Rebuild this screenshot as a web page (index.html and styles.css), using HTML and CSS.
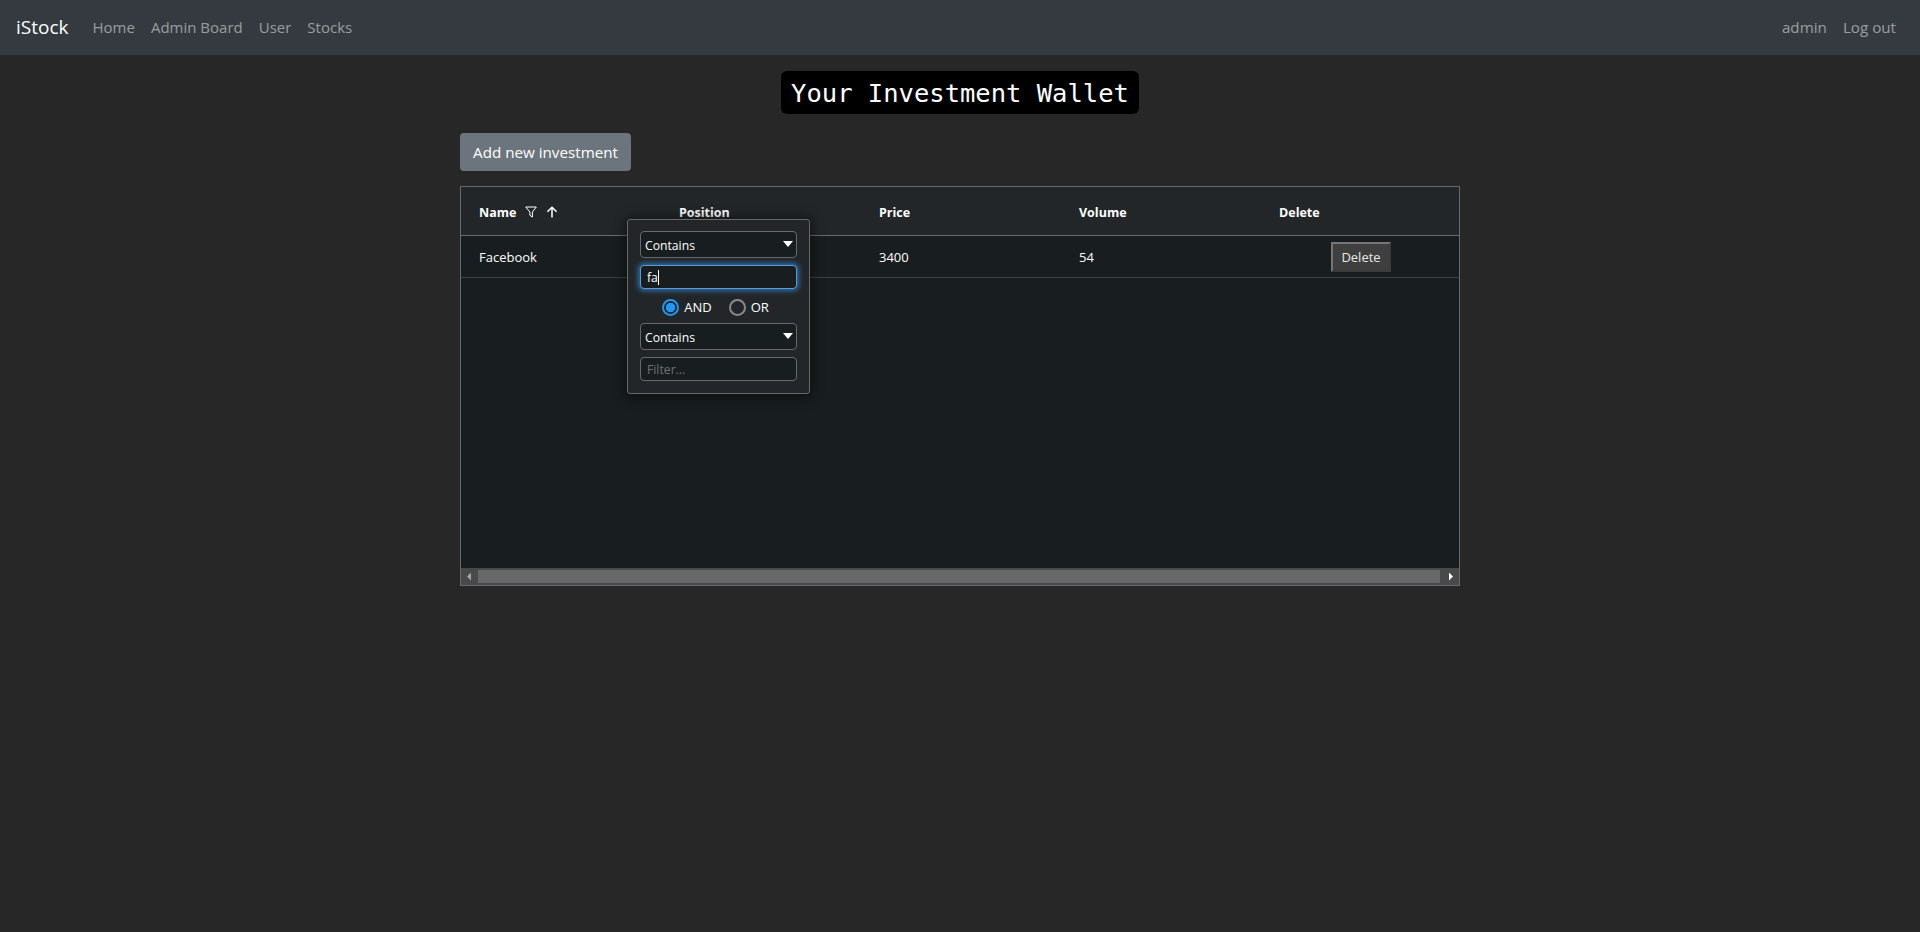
FILE: index.html
```html
<!DOCTYPE html>
<html lang="en">
<head>
    <meta charset="UTF-8">
    <title>iStock</title>
    <link rel="stylesheet" href="styles.css">
</head>
<body>
    <nav class="navbar">
        <a class="brand">iStock</a>
        <a class="nav-link">Home</a>
        <a class="nav-link">Admin Board</a>
        <a class="nav-link">User</a>
        <a class="nav-link">Stocks</a>
        <div class="nav-right">
            <a class="nav-link">admin</a>
            <a class="nav-link">Log out</a>
        </div>
    </nav>

    <main class="container">
        <div class="title-row">
            <h1 class="title">Your Investment Wallet</h1>
        </div>
        <button class="btn-add">Add new investment</button>

        <div class="grid">
            <div class="grid-header">
                <div class="cell head-cell">
                    Name
                    <svg class="head-icon" viewBox="0 0 12 12" width="12" height="12">
                        <path d="M.7 1h10.6L7.4 6v5L4.9 9.3V6z" fill="none" stroke="#fff" stroke-width="1"/>
                    </svg>
                    <svg class="head-icon" viewBox="0 0 12 12" width="12" height="12">
                        <path d="M6 11.5V1.2M1.4 5.8L6 1.2l4.6 4.6" fill="none" stroke="#fff" stroke-width="1.5"/>
                    </svg>
                </div>
                <div class="cell head-cell">Position</div>
                <div class="cell head-cell">Price</div>
                <div class="cell head-cell">Volume</div>
                <div class="cell head-cell">Delete</div>
            </div>
            <div class="grid-row">
                <div class="cell">Facebook</div>
                <div class="cell"></div>
                <div class="cell">3400</div>
                <div class="cell">54</div>
                <div class="cell"><button class="btn-delete">Delete</button></div>
            </div>
            <div class="grid-empty"></div>
            <div class="scrollbar">
                <span class="arrow arrow-left"></span>
                <span class="thumb"></span>
                <span class="arrow arrow-right"></span>
            </div>

            <div class="filter-menu">
                <div class="fake-select">Contains</div>
                <div class="fake-input focused">fa<span class="caret"></span></div>
                <div class="radios">
                    <span class="radio checked"></span><span class="radio-label">AND</span>
                    <span class="radio"></span><span class="radio-label">OR</span>
                </div>
                <div class="fake-select">Contains</div>
                <div class="fake-input placeholder">Filter...</div>
            </div>
        </div>
    </main>
</body>
</html>
```

FILE: styles.css
```css
* {
    box-sizing: border-box;
}

body {
    margin: 0;
    height: 932px;
    overflow: hidden;
    background-color: #272727;
    color: #fff;
    font-family: "Open Sans", "Noto Sans", sans-serif;
    font-size: 16px;
}

.navbar {
    display: flex;
    align-items: center;
    height: 55px;
    padding: 0 16px 2px;
    background-color: #343a40;
}

.brand {
    font-size: 19px;
    margin-right: 16px;
    color: #fff;
}

.nav-link {
    padding: 0 8px;
    color: rgba(255, 255, 255, 0.5);
    font-size: 15px;
}

.nav-right {
    display: flex;
    margin-left: auto;
    padding-top: 1px;
}

.nav-right .nav-link {
    font-size: 15.2px;
}

.container {
    width: 1000px;
    margin: 0 auto;
}

.title-row {
    display: flex;
    justify-content: center;
    margin-top: 16px;
}

.title {
    margin: 0;
    padding: 0 10px;
    height: 43px;
    line-height: 45px;
    background-color: #000;
    border-radius: 6px;
    font-family: "DejaVu Sans Mono", monospace;
    font-size: 25.5px;
    font-weight: normal;
}

.btn-add {
    display: block;
    width: 171px;
    height: 38px;
    margin-top: 19px;
    border: none;
    border-radius: 4px;
    background-color: #6c757d;
    color: #fff;
    font-family: inherit;
    font-size: 15.2px;
}

.grid {
    position: relative;
    display: flex;
    flex-direction: column;
    height: 400px;
    margin-top: 15px;
    border: 1px solid #68686e;
    background-color: #181d1f;
    font-size: 13px;
}

.grid-header {
    display: grid;
    grid-template-columns: repeat(5, 200px);
    height: 49px;
    padding-top: 2px;
    background-color: #222628;
    border-bottom: 1px solid #68686e;
}

.grid-row {
    display: grid;
    grid-template-columns: repeat(5, 200px);
    height: 42px;
    border-bottom: 1px solid #3c4043;
}

.cell {
    display: flex;
    align-items: center;
    padding-left: 18px;
}

.head-cell {
    font-weight: 700;
    font-size: 12.5px;
}

.head-icon {
    margin-left: 9px;
}

.btn-delete {
    width: 60px;
    height: 30px;
    margin-left: 52px;
    padding: 0;
    border: 2px solid;
    border-color: #767676 #3b3b3b #3b3b3b #767676;
    background-color: #3f3f3f;
    color: #e8e8e8;
    font-family: inherit;
    font-size: 13px;
}

.grid-empty {
    flex: 1;
}

.scrollbar {
    display: flex;
    align-items: center;
    height: 17px;
    background-color: #494949;
}

.thumb {
    flex: 1;
    height: 13px;
    background-color: #686868;
}

.arrow {
    height: 8px;
    flex: none;
}

.arrow-left {
    width: 17px;
    background-color: #a3a3a3;
    clip-path: polygon(6px 4px, 10px 0, 10px 8px);
}

.arrow-right {
    width: 19px;
    background-color: #fff;
    clip-path: polygon(9px 0, 13px 4px, 9px 8px);
}

.filter-menu {
    position: absolute;
    left: 166px;
    top: 32px;
    width: 183px;
    height: 175px;
    padding: 11px 12px;
    background-color: #222628;
    border: 1px solid #68686e;
    border-radius: 3px;
    box-shadow: 0 1px 12px 2px rgba(0, 0, 0, 0.5);
    font-size: 12.2px;
}

.fake-select,
.fake-input {
    position: relative;
    padding-left: 4px;
    border: 1px solid #68686e;
    border-radius: 4px;
    background-color: #181d1f;
}

.fake-select {
    height: 27px;
    line-height: 27px;
}

.fake-select::after {
    content: "";
    position: absolute;
    right: 3px;
    top: 9px;
    border-left: 5px solid transparent;
    border-right: 5px solid transparent;
    border-top: 6px solid #fff;
}

.fake-input {
    height: 24px;
    line-height: 24px;
    margin-top: 7px;
    padding-left: 6px;
}

.fake-input.focused {
    border-color: #5b9bd5;
    box-shadow: 0 0 5px 2px rgba(52, 140, 220, 0.7);
}

.caret {
    display: inline-block;
    width: 1px;
    height: 15px;
    vertical-align: -3px;
    background-color: #fff;
}

.placeholder {
    color: #6e7376;
}

.radios {
    display: flex;
    align-items: center;
    justify-content: center;
    height: 20px;
    margin: 7px 0;
    padding: 2px 6px 0 0;
    font-size: 13px;
}

.radio {
    width: 17px;
    height: 17px;
    margin-right: 5px;
    border: 2px solid #8a8a8a;
    border-radius: 50%;
}

.radio.checked {
    border-color: #2196f3;
    background: radial-gradient(circle, #2196f3 4.5px, transparent 5px);
}

.radio-label {
    margin-right: 17px;
}

.radio-label:last-child {
    margin-right: 0;
}
```
